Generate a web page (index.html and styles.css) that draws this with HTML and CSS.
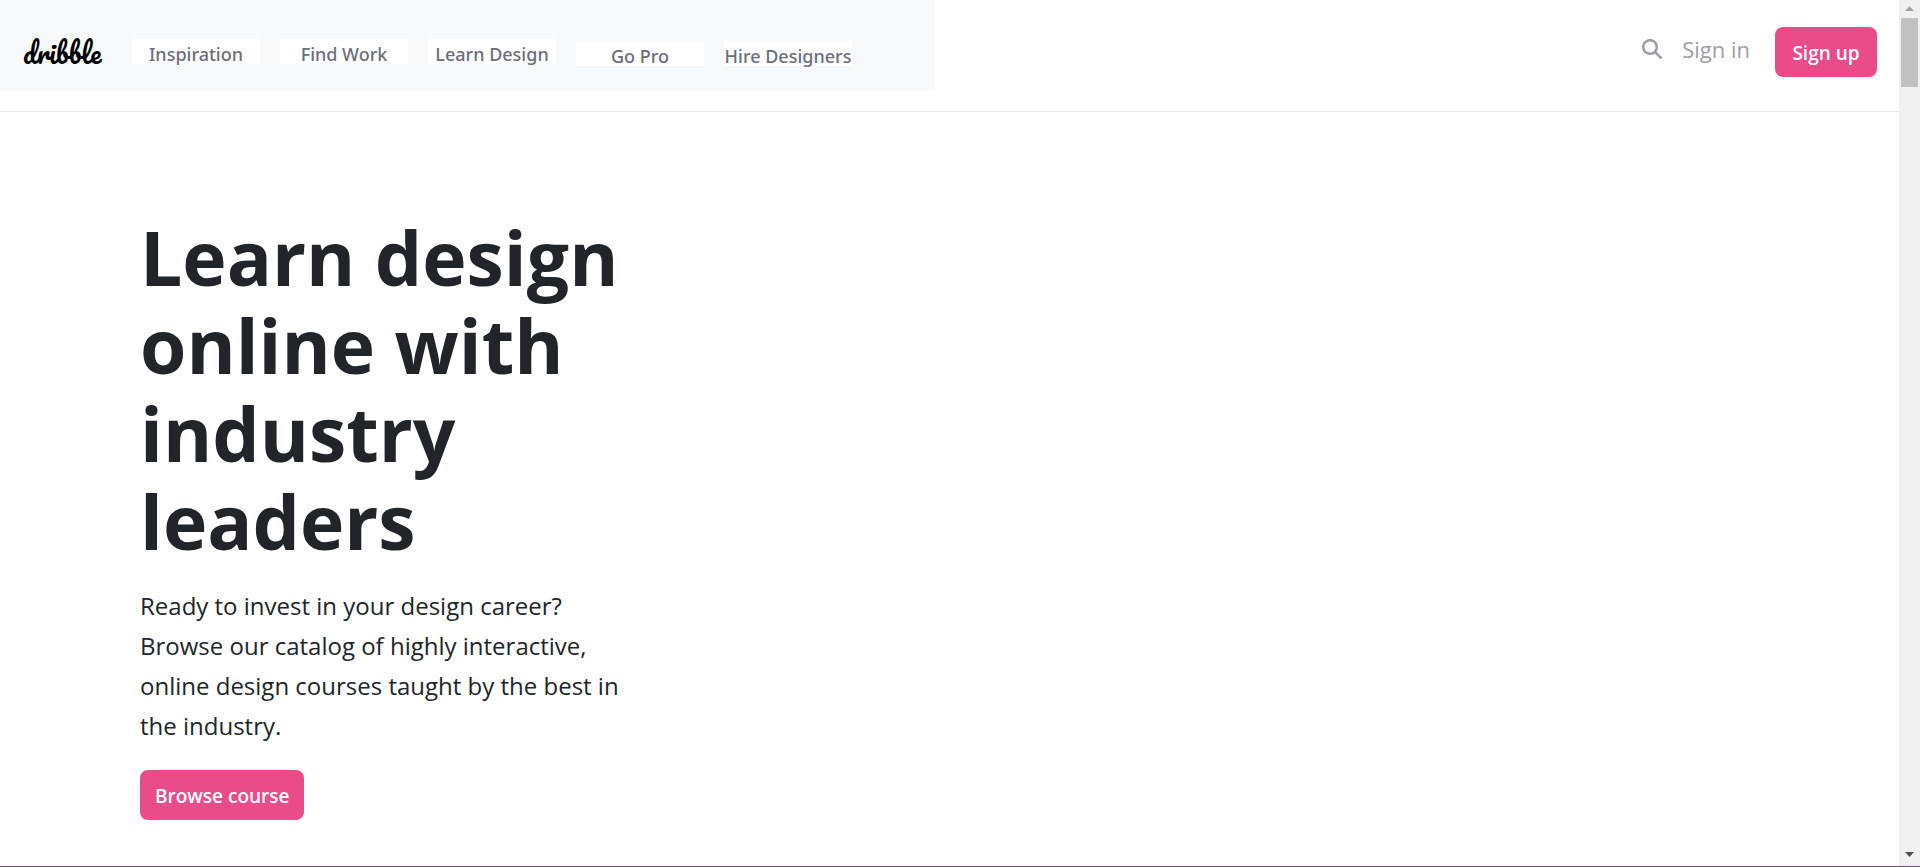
FILE: index.html
```html
<!DOCTYPE html>
<html lang="en">
<head>
<meta charset="utf-8">
<title>dribble</title>
<link rel="stylesheet" href="styles.css">
</head>
<body>
<div class="window">
  <div class="page">
    <header class="header">
      <nav class="nav">
        <a class="logo" href="#">dribble</a>
        <ul class="menu">
          <li><a class="menu-link" href="#">Inspiration</a></li>
          <li><a class="menu-link" href="#">Find Work</a></li>
          <li><a class="menu-link" href="#">Learn Design</a></li>
          <li class="menu-low"><a class="menu-link" href="#">Go Pro</a></li>
          <li class="menu-low"><a class="menu-link" href="#">Hire Designers</a></li>
        </ul>
      </nav>
      <div class="account">
        <button class="search" type="button" aria-label="Search">
          <svg viewBox="0 0 20 20" width="20" height="20" fill="none" stroke="currentColor" stroke-width="2.500" stroke-linecap="round"><circle cx="8" cy="8" r="6.800"/><path d="M13 13l5.700 5.700"/></svg>
        </button>
        <a class="sign-in" href="#">Sign in</a>
        <button class="button" type="button">Sign up</button>
      </div>
    </header>
    <main class="hero">
      <h1 class="title">Learn design online with industry leaders</h1>
      <p class="lead">Ready to invest in your design career? Browse our catalog of highly interactive, online design courses taught by the best in the industry.</p>
      <button class="button" type="button">Browse course</button>
    </main>
  </div>
  <div class="scrollbar" aria-hidden="true">
    <svg class="arrow arrow-up" viewBox="0 0 9 5" width="9" height="5"><path d="M0 5L4.500 0L9 5z"/></svg>
    <div class="thumb"></div>
    <svg class="arrow arrow-down" viewBox="0 0 9 5" width="9" height="5"><path d="M0 0h9L4.500 5z"/></svg>
  </div>
</div>
</body>
</html>
```

FILE: styles.css
```css
* {
  box-sizing: border-box;
}

body {
  margin: 0;
  background: #fff;
  color: #212529;
  font-family: "Segoe UI", "Open Sans", "Noto Sans", sans-serif;
}

a {
  color: inherit;
  text-decoration: none;
}

.window {
  display: flex;
  min-height: 100vh;
  border-bottom: 1px solid #6f4d72;
}

.page {
  flex: 1;
}

.header {
  display: flex;
  justify-content: space-between;
  align-items: flex-start;
  padding-bottom: 20px;
  border-bottom: 1px solid #e7e7e9;
}

.nav {
  display: flex;
  gap: 28px;
  align-items: flex-start;
  padding: 32px 83px 17px 23px;
  background: #f8f9fb;
}

.logo {
  width: 81px;
  color: #000;
  font-family: Pacifico, Lato, cursive;
  font-size: 27px;
  font-weight: 400;
  line-height: 42px;
}

.menu {
  display: flex;
  gap: 20px;
  margin: 0;
  padding: 7px 0 0;
  list-style: none;
}

.menu-low {
  padding-top: 2px;
}

.menu-link {
  display: block;
  width: 128px;
  height: 25px;
  background: #fff;
  color: #6e6d7a;
  font-family: "Segoe UI", "Noto Sans", sans-serif;
  font-size: 18px;
  font-weight: 500;
  line-height: 30px;
  text-align: center;
  white-space: nowrap;
}

.account {
  display: flex;
  align-items: flex-start;
  padding: 27px 22px 0 0;
}

.search {
  display: flex;
  margin: 12px 20px 0 0;
  padding: 0;
  border: 0;
  background: none;
  color: #9e9ea7;
}

.sign-in {
  margin-right: 25px;
  color: #9e9ea7;
  font-size: 22px;
  line-height: 44px;
}

.button {
  min-width: 102px;
  height: 50px;
  padding: 2px 15px 0;
  border: 0;
  border-radius: 8px;
  background: #ea4c89;
  color: #fff;
  font-family: inherit;
  font-size: 19px;
  font-weight: 600;
}

.hero {
  width: 640px;
  padding: 101px 10px 46px 140px;
}

.title {
  margin: 0 0 21px;
  font-size: 75px;
  font-weight: 700;
  line-height: 88px;
}

.lead {
  margin: 0 0 24px;
  font-size: 24px;
  line-height: 40px;
}

.scrollbar {
  display: flex;
  flex-direction: column;
  align-items: center;
  width: 21px;
  padding: 6px 2px 9px;
  background: #f0f0f0;
}

.arrow-up {
  fill: #a3a3a3;
}

.arrow-down {
  margin-top: auto;
  fill: #505050;
}

.thumb {
  width: 17px;
  height: 69px;
  margin-top: 7px;
  background: #c1c1c1;
}
```
